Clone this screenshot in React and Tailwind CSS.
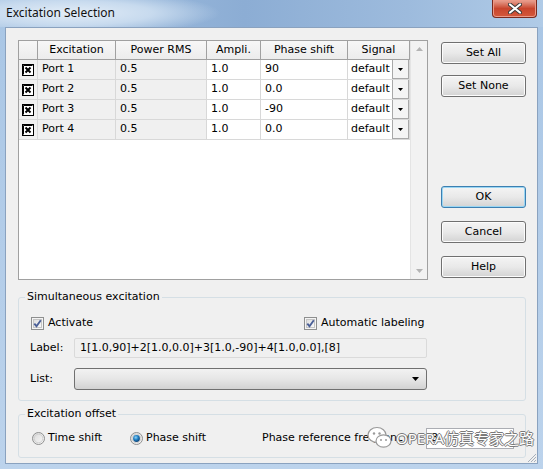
import React from "react";

const ROWS = [
  { name: "Port 1", power: "0.5", ampli: "1.0", phase: "90" },
  { name: "Port 2", power: "0.5", ampli: "1.0", phase: "0.0" },
  { name: "Port 3", power: "0.5", ampli: "1.0", phase: "-90" },
  { name: "Port 4", power: "0.5", ampli: "1.0", phase: "0.0" },
];

function XBox() {
  return (
    <svg width="12" height="12" viewBox="0 0 12 12">
      <rect x="0.5" y="0.5" width="11" height="11" fill="#fff" stroke="#000" />
      <path d="M1.5 1.5 L10.5 1.5 M1.5 1.5 L1.5 10.5" stroke="#000" strokeWidth="1" />
      <path d="M3.5 3.5 L8.5 8.5 M8.5 3.5 L3.5 8.5" stroke="#000" strokeWidth="2" />
    </svg>
  );
}

function CheckBox() {
  return (
    <svg width="13" height="13" viewBox="0 0 13 13">
      <defs>
        <linearGradient id="cbg" x1="0" y1="0" x2="1" y2="1">
          <stop offset="0" stopColor="#dcdcdc" />
          <stop offset="1" stopColor="#fbfbfb" />
        </linearGradient>
      </defs>
      <rect x="0.5" y="0.5" width="12" height="12" fill="#f4f4f4" stroke="#8e8f8f" />
      <rect x="2.5" y="2.5" width="8" height="8" fill="url(#cbg)" stroke="#c5c5c5" />
      <path d="M3.3 6.6 L5.5 9.2 L9.8 3.3" fill="none" stroke="#4a5f97" strokeWidth="1.9" />
    </svg>
  );
}

function Radio({ checked }) {
  return (
    <svg width="13" height="13" viewBox="0 0 13 13">
      <defs>
        <radialGradient id="rdot" cx="0.4" cy="0.35" r="0.7">
          <stop offset="0" stopColor="#8fd3f7" />
          <stop offset="0.5" stopColor="#1e7ec2" />
          <stop offset="1" stopColor="#0b3a6b" />
        </radialGradient>
        <linearGradient id="rbg" x1="0" y1="0" x2="1" y2="1">
          <stop offset="0" stopColor="#d8d8d8" />
          <stop offset="1" stopColor="#fafafa" />
        </linearGradient>
      </defs>
      <circle cx="6.5" cy="6.5" r="6" fill="url(#rbg)" stroke="#8e8f8f" />
      <circle cx="6.5" cy="6.5" r="4.3" fill="none" stroke="#d0d0d0" />
      {checked && <circle cx="6.5" cy="6.5" r="3.4" fill="url(#rdot)" />}
    </svg>
  );
}

function WinButton({ children, focused }) {
  return (
    <div
      className={`flex h-[22px] w-[85px] items-center justify-center rounded-[3px] border bg-linear-to-b from-[#f4f4f4] via-[#e9e9e9] to-[#d3d3d3] text-[11px] text-black ${
        focused ? "border-[#3c7fb1] shadow-[inset_0_0_0_1px_#9ad6f3]" : "border-[#707070] shadow-[inset_0_0_0_1px_#fcfcfc]"
      }`}
    >
      {children}
    </div>
  );
}

function GroupBox({ title, className, children }) {
  return (
    <div className={`relative rounded-[3px] border border-[#d5dfe5] ${className}`}>
      <span className="absolute -top-[8px] left-[6px] bg-[#f0f0f0] px-[2px] leading-[14px]">{title}</span>
      {children}
    </div>
  );
}

function ExcitationGrid() {
  const head = "flex h-[19px] items-center justify-center border-r border-b border-[#a0a0a0] bg-linear-to-b from-[#f7f7f7] to-[#ececec]";
  const cell = "flex h-[20px] items-center border-r border-b border-[#d8d8d8] pl-[4px]";
  return (
    <div className="flex h-[240px] w-[410px] border border-[#a0a0a0] bg-white">
      <div className="w-[391px]">
        <div className="grid grid-cols-[19px_78px_91px_54px_87px_62px]">
          <div className={head} />
          <div className={head}>Excitation</div>
          <div className={head}>Power RMS</div>
          <div className={head}>Ampli.</div>
          <div className={head}>Phase shift</div>
          <div className={head}>Signal</div>
          {ROWS.map((r) => (
            <React.Fragment key={r.name}>
              <div className="flex h-[20px] items-center justify-center border-r border-b border-[#d8d8d8] bg-[#f0f0f0]">
                <XBox />
              </div>
              <div className={`${cell} bg-[#f0f0f0]`}>{r.name}</div>
              <div className={`${cell} bg-[#f0f0f0]`}>{r.power}</div>
              <div className={cell}>{r.ampli}</div>
              <div className={cell}>{r.phase}</div>
              <div className="flex h-[20px] items-center justify-between border-r border-b border-[#d8d8d8] pl-[3px]">
                <span>default</span>
                <span className="flex h-[19px] w-[17px] items-center justify-center border-x border-b border-[#a8a8a8] bg-[#f4f4f4]">
                  <svg width="5" height="3" viewBox="0 0 5 3">
                    <path d="M0 0 H5 L2.5 3 Z" fill="#000" />
                  </svg>
                </span>
              </div>
            </React.Fragment>
          ))}
        </div>
      </div>
      <div className="flex w-[17px] flex-col items-center justify-between border-l border-[#e4e4e4] bg-[#f2f2f2] py-[6px]">
        <svg width="7" height="4" viewBox="0 0 7 4">
          <path d="M0 4 H7 L3.5 0 Z" fill="#b4b4b4" />
        </svg>
        <svg width="7" height="4" viewBox="0 0 7 4">
          <path d="M0 0 H7 L3.5 4 Z" fill="#b4b4b4" />
        </svg>
      </div>
    </div>
  );
}

export default function App() {
  return (
    <div className="relative h-[469px] w-[543px] overflow-hidden bg-linear-to-b from-[#a9c6e5] to-[#bcd3ec] font-['DejaVu_Sans',Tahoma,sans-serif] text-[11px] text-black">
      {/* title bar */}
      <div className="flex h-[27px] items-start bg-[image:radial-gradient(ellipse_150px_22px_at_70px_13px,#e3edf7_0%,#c7daee_55%,transparent_100%),linear-gradient(90deg,#a7c4e3,#8cadd4_45%,#9dbbdd_75%,#b0cbe7)]">
        <span className="mt-[5px] ml-[6px] font-['Noto_Sans',sans-serif] text-[12px] leading-[16px] text-[#111]">
          Excitation Selection
        </span>
        <div className="mr-[6px] ml-auto flex h-[18px] w-[45px] items-center justify-center rounded-b-[4px] border border-t-0 border-[#7a2a1e] bg-linear-to-b from-[#e8a596] via-[#c8452d] to-[#d4583b] shadow-[inset_0_0_0_1px_#eb9a88]">
          <svg width="14" height="11" viewBox="0 0 14 11">
            <path d="M2 1.5 L12 9.5 M12 1.5 L2 9.5" stroke="#3a3a3a" strokeWidth="4" strokeLinecap="round" />
            <path d="M2 1.5 L12 9.5 M12 1.5 L2 9.5" stroke="#fff" strokeWidth="2.2" strokeLinecap="round" />
          </svg>
        </div>
      </div>

      {/* client area */}
      <div className="relative mx-[5px] h-[437px] w-[533px] border border-[#8aa2bf] bg-[#f0f0f0] pt-[12px] pl-[12px]">
        <div className="flex gap-[13px]">
          <ExcitationGrid />
          <div className="flex flex-col pt-[2px]">
            <WinButton>Set All</WinButton>
            <div className="mt-[11px]">
              <WinButton>Set None</WinButton>
            </div>
            <div className="mt-[89px] flex flex-col gap-[13px]">
              <WinButton focused>OK</WinButton>
              <WinButton>Cancel</WinButton>
              <WinButton>Help</WinButton>
            </div>
          </div>
        </div>

        <GroupBox title="Simultaneous excitation" className="mt-[17px] h-[104px] w-[508px] pt-[17px] pl-[12px]">
          <div className="flex h-[16px] items-center">
            <div className="flex w-[273px] items-center gap-[4px]">
              <CheckBox />
              <span>Activate</span>
            </div>
            <div className="flex items-center gap-[4px]">
              <CheckBox />
              <span>Automatic labeling</span>
            </div>
          </div>
          <div className="mt-[7px] flex items-center">
            <span className="w-[44px] -ml-[1px]">Label:</span>
            <div className="flex h-[20px] w-[353px] items-center rounded-[2px] border border-[#dadada] bg-[#f0f0f0] pl-[5px]">
              1[1.0,90]+2[1.0,0.0]+3[1.0,-90]+4[1.0,0.0],[8]
            </div>
          </div>
          <div className="mt-[10px] flex items-center">
            <span className="w-[44px] -ml-[1px]">List:</span>
            <div className="flex h-[22px] w-[353px] items-center justify-end rounded-[3px] border border-[#707070] bg-linear-to-b from-[#f2f2f2] via-[#e6e6e6] to-[#d2d2d2] pr-[7px]">
              <svg width="7" height="4" viewBox="0 0 7 4">
                <path d="M0 0 H7 L3.5 4 Z" fill="#000" />
              </svg>
            </div>
          </div>
        </GroupBox>

        <GroupBox title="Excitation offset" className="mt-[13px] h-[44px] w-[508px] pt-[13px] pl-[13px]">
          <div className="flex h-[21px] items-center">
            <div className="flex w-[98px] items-center gap-[3px]">
              <Radio />
              <span>Time shift</span>
            </div>
            <div className="flex w-[132px] items-center gap-[3px]">
              <Radio checked />
              <span>Phase shift</span>
            </div>
            <span className="w-[164px]">Phase reference frequency:</span>
            <div className="flex h-[21px] w-[88px] items-center border border-[#abadb3] bg-white pl-[4px]">8</div>
          </div>
        </GroupBox>

        {/* resize grip */}
        <svg className="absolute right-0 bottom-0" width="11" height="11" viewBox="0 0 11 11">
          <path d="M10 2 L2 10 M10 5 L5 10 M10 8 L8 10" stroke="#a7b0bb" strokeWidth="1" />
        </svg>

        {/* watermark */}
        <div className="pointer-events-none absolute top-[396px] left-[360px] flex items-center gap-[2px]">
          <svg width="28" height="28" viewBox="0 0 28 28">
            <ellipse cx="11" cy="11" rx="9" ry="7.5" fill="#fff" stroke="#9a9a9a" strokeWidth="1.2" />
            <ellipse cx="17.5" cy="17" rx="7.5" ry="6.2" fill="#fff" stroke="#9a9a9a" strokeWidth="1.2" />
            <circle cx="8" cy="9.5" r="1.2" fill="#9a9a9a" />
            <circle cx="13.5" cy="9.5" r="1.2" fill="#9a9a9a" />
            <circle cx="15" cy="16" r="1" fill="#9a9a9a" />
            <circle cx="20" cy="16" r="1" fill="#9a9a9a" />
          </svg>
          <span className="font-['Noto_Sans','Noto_Sans_CJK_SC',sans-serif] text-[15px] leading-[20px] text-white [text-shadow:1px_0_0_#7a7a7a,-1px_0_0_#7a7a7a,0_1px_0_#7a7a7a,0_-1px_0_#7a7a7a]">
            OPERA仿真专家之路
          </span>
        </div>
      </div>
    </div>
  );
}
